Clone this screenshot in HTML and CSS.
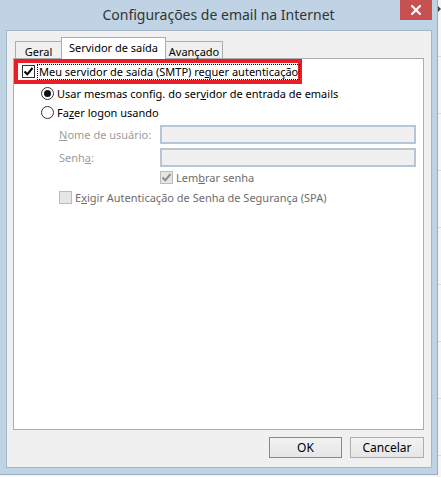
FILE: index.html
```html
<!DOCTYPE html>
<html lang="pt-BR">
<head>
<meta charset="utf-8">
<title>Configurações de email na Internet</title>
<link rel="stylesheet" href="styles.css">
</head>
<body>
<div class="screen">
  <div class="top">
    <div class="window">
      <div class="titlebar">
        <span class="spacer"></span>
        <span class="title">Configurações de email na Internet</span>
        <span class="close-col">
          <span class="close">
            <svg width="10" height="10" viewBox="0 0 10 10"><path d="M1 1 L9 9 M9 1 L1 9" stroke="#fff" stroke-width="2.2" stroke-linecap="square"/></svg>
          </span>
        </span>
      </div>
      <div class="client">
        <div class="tabs">
          <div class="tab tab-first">Geral</div>
          <div class="tab tab-active">Servidor de saída</div>
          <div class="tab tab-last">Avançado</div>
        </div>
        <div class="panel">
          <div class="auth">
            <span class="check">
              <svg width="11" height="11" viewBox="0 0 11 11"><path d="M1.5 5.5 L4.3 8.3 L9.5 2" fill="none" stroke="#000" stroke-width="2"/></svg>
            </span>
            <span class="focus">Meu servidor de saída (SMTP) re<u>q</u>uer autenticação</span>
          </div>
          <div class="radio-row">
            <span class="radio radio-on"><span class="dot"></span></span>
            <span class="txt">Usar mesmas config. do ser<u>v</u>idor de entrada de emails</span>
          </div>
          <div class="radio-row">
            <span class="radio"></span>
            <span class="txt">Fa<u>z</u>er logon usando</span>
          </div>
          <div class="form">
            <span class="lbl"><u>N</u>ome de usuário:</span>
            <span class="field"></span>
            <span class="lbl">Senh<u>a</u>:</span>
            <span class="field"></span>
            <span class="lbl"></span>
            <span class="check-row">
              <span class="check check-dis">
                <svg width="11" height="11" viewBox="0 0 11 11"><path d="M1.5 5.5 L4.3 8.3 L9.5 2" fill="none" stroke="#8c8c8c" stroke-width="2"/></svg>
              </span>
              <span class="dis-txt">Lem<u>b</u>rar senha</span>
            </span>
          </div>
          <div class="spa-row">
            <span class="check check-dis"></span>
            <span class="dis-txt">E<u>x</u>igir Autenticação de Senha de Segurança (SPA)</span>
          </div>
        </div>
        <div class="buttons">
          <span class="btn btn-default">OK</span>
          <span class="btn">Cancelar</span>
        </div>
      </div>
    </div>
    <div class="desk">
      <span class="desk-arrow"></span>
    </div>
  </div>
  <div class="bottom-strip"></div>
</div>
</body>
</html>
```

FILE: styles.css
```css
* { box-sizing: border-box; }
html, body { margin: 0; padding: 0; }
body {
  width: 441px;
  height: 477px;
  overflow: hidden;
  background: #f4f4f4;
  font-family: "Noto Sans", "Open Sans", sans-serif;
  font-size: 11px;
  color: #000;
}
.screen { display: flex; flex-direction: column; width: 441px; height: 477px; }
.top { display: flex; height: 475px; }
.window {
  width: 438px;
  height: 475px;
  background: #bfd3e5;
  border-right: 1px solid #98adc2;
  border-bottom: 1px solid #98adc2;
  display: flex;
  flex-direction: column;
}
.titlebar {
  height: 30px;
  display: grid;
  grid-template-columns: 38px 1fr 38px;
  align-items: start;
}
.title {
  text-align: center;
  font-size: 14px;
  color: #333;
  padding-top: 5px;
  white-space: nowrap;
}
.close-col { display: flex; justify-content: flex-end; padding-right: 5px; }
.close {
  width: 32px;
  height: 20px;
  background: #c75050;
  display: flex;
  align-items: center;
  justify-content: center;
}
.client {
  flex: 1;
  margin: 0 5px 6px 6px;
  background: #f0f0f0;
  border: 1px solid #a5b6c7;
  display: flex;
  flex-direction: column;
  padding: 6px 7px 9px 0;
}
.tabs {
  display: flex;
  align-items: flex-end;
  margin: 0 0 -1px 8px;
  position: relative;
  z-index: 1;
}
.tab {
  height: 17px;
  margin-bottom: 1px;
  background: #f0f0f0;
  border-top: 1px solid #adadad;
  display: flex;
  align-items: center;
  justify-content: center;
  white-space: nowrap;
  padding-top: 2px;
}
.tab-first { width: 46px; border-left: 1px solid #adadad; }
.tab-last { width: 57px; border-right: 1px solid #adadad; }
.tab-active {
  width: 105px;
  height: 22px;
  margin-bottom: 0;
  background: #fff;
  border-left: 1px solid #adadad;
  border-right: 1px solid #adadad;
  align-items: flex-start;
  padding-top: 2px;
}
.panel {
  flex: 1;
  margin: 0 0 0 6px;
  background: #fff;
  border: 1px solid #adadad;
  display: flex;
  flex-direction: column;
}
.auth {
  width: 288px;
  height: 25px;
  border: 4px solid #e81f27;
  display: flex;
  align-items: center;
  padding-left: 4px;
}
.check {
  width: 13px;
  height: 13px;
  border: 1px solid #333;
  background: #fff;
  display: flex;
  align-items: center;
  justify-content: center;
  flex: none;
}
.focus {
  margin-left: 2px;
  border: 1px dotted #000;
  padding: 0 1px;
  line-height: 14px;
  white-space: nowrap;
}
.radio-row {
  height: 19px;
  display: flex;
  align-items: center;
  margin-left: 27px;
}
.radio {
  width: 13px;
  height: 13px;
  border: 1px solid #333;
  border-radius: 50%;
  background: #fff;
  display: flex;
  align-items: center;
  justify-content: center;
  flex: none;
}
.dot { width: 7px; height: 7px; border-radius: 50%; background: #111; }
.txt { margin-left: 3px; white-space: nowrap; }
.form {
  margin: 3px 7px 0 45px;
  display: grid;
  grid-template-columns: 101px 1fr;
  grid-auto-rows: auto;
  row-gap: 4px;
  align-items: center;
}
.lbl { color: #9d9d9d; white-space: nowrap; }
.field {
  height: 19px;
  background: #f0f0f0;
  border: 2px solid #b7c6d6;
}
.check-row { display: flex; align-items: center; height: 17px; margin-top: -2px; }
.check-dis { border-color: #bcbcbc; background: #e6e6e6; }
.dis-txt { color: #6d6d6d; margin-left: 3px; white-space: nowrap; }
.spa-row {
  margin: 3px 0 0 45px;
  height: 17px;
  display: flex;
  align-items: center;
}
.buttons {
  display: flex;
  justify-content: flex-end;
  gap: 8px;
  margin-top: 7px;
}
.btn {
  width: 74px;
  height: 21px;
  border: 1px solid #adadad;
  background: linear-gradient(#f2f2f2, #e6e6e6);
  display: flex;
  align-items: center;
  justify-content: center;
  font-size: 12px;
}
.btn-default { width: 73px; border-color: #3c9cf2; }
.desk {
  width: 3px;
  height: 475px;
  background: repeating-linear-gradient(#f6f6f6 0, #f6f6f6 56px, #dcdcdc 56px, #dcdcdc 57px);
  position: relative;
}
.desk-arrow {
  position: absolute;
  left: 0;
  top: 6px;
  width: 0;
  height: 0;
  border-top: 3px solid transparent;
  border-bottom: 3px solid transparent;
  border-left: 3px solid #444;
}
.bottom-strip { height: 2px; background: #f6f6f6; }
u { text-decoration-thickness: 1px; text-underline-offset: 1px; }
```
